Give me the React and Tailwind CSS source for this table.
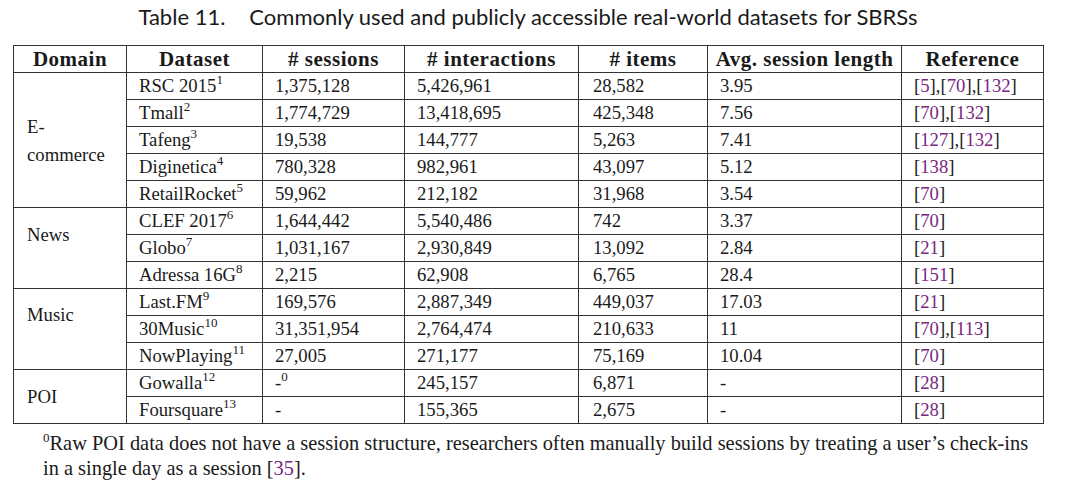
const serif = { fontFamily: '"Liberation Serif", "DejaVu Serif", serif' };

const groups = [
  {
    domain: ["E-", "commerce"],
    pad: "pt-[40px]",
    rows: [
      ["RSC 2015", "1", "1,375,128", "", "5,426,961", "28,582", "3.95", ["5", "70", "132"]],
      ["Tmall", "2", "1,774,729", "", "13,418,695", "425,348", "7.56", ["70", "132"]],
      ["Tafeng", "3", "19,538", "", "144,777", "5,263", "7.41", ["127", "132"]],
      ["Diginetica", "4", "780,328", "", "982,961", "43,097", "5.12", ["138"]],
      ["RetailRocket", "5", "59,962", "", "212,182", "31,968", "3.54", ["70"]],
    ],
  },
  {
    domain: ["News"],
    pad: "pt-[13px]",
    rows: [
      ["CLEF 2017", "6", "1,644,442", "", "5,540,486", "742", "3.37", ["70"]],
      ["Globo", "7", "1,031,167", "", "2,930,849", "13,092", "2.84", ["21"]],
      ["Adressa 16G", "8", "2,215", "", "62,908", "6,765", "28.4", ["151"]],
    ],
  },
  {
    domain: ["Music"],
    pad: "pt-[12px]",
    rows: [
      ["Last.FM", "9", "169,576", "", "2,887,349", "449,037", "17.03", ["21"]],
      ["30Music", "10", "31,351,954", "", "2,764,474", "210,633", "11", ["70", "113"]],
      ["NowPlaying", "11", "27,005", "", "271,177", "75,169", "10.04", ["70"]],
    ],
  },
  {
    domain: ["POI"],
    pad: "pt-[13px]",
    rows: [
      ["Gowalla", "12", "-", "0", "245,157", "6,871", "-", ["28"]],
      ["Foursquare", "13", "-", "", "155,365", "2,675", "-", ["28"]],
    ],
  },
];

function Refs({ ids }) {
  return (
    <>
      {ids.map((id, i) => (
        <span key={id}>
          {i > 0 ? "," : null}[<span className="text-[#7a2682]">{id}</span>]
        </span>
      ))}
    </>
  );
}

function Sup({ children }) {
  return <sup className="relative top-[-8px] align-baseline text-[13px] leading-none">{children}</sup>;
}

const cell = "h-[27px] border border-[#333] px-[12px] py-0 leading-[26px] whitespace-nowrap";
const head =
  "h-[27px] border border-[#333] px-0 py-0 text-center text-[21px] font-bold tracking-[0.5px] leading-[26px] whitespace-nowrap";

export default function App() {
  return (
    <div className="h-[491px] w-[1080px] overflow-hidden bg-white text-[#1a1a1a]">
      <div
        className="ml-[13px] w-[1030px] pt-[3px] text-center text-[22px] leading-[28px]"
        style={{ fontFamily: "Lato, 'Open Sans', sans-serif" }}
      >
        Table 11.<span className="ml-[24px]">Commonly used and publicly accessible real-world datasets for SBRSs</span>
      </div>

      <table
        className="ml-[13px] mt-[14px] w-[1030px] table-fixed border-collapse text-[18.7px]"
        style={serif}
      >
        <colgroup>
          <col className="w-[113px]" />
          <col className="w-[136px]" />
          <col className="w-[142px]" />
          <col className="w-[174px]" />
          <col className="w-[129px]" />
          <col className="w-[194px]" />
          <col className="w-[142px]" />
        </colgroup>
        <thead>
          <tr>
            <th className={head}>Domain</th>
            <th className={head}>Dataset</th>
            <th className={head}># sessions</th>
            <th className={head}># interactions</th>
            <th className={head}># items</th>
            <th className={head}>Avg. session length</th>
            <th className={head}>Reference</th>
          </tr>
        </thead>
        <tbody>
          {groups.map((g) =>
            g.rows.map((r, i) => (
              <tr key={r[0]}>
                {i === 0 ? (
                  <td
                    rowSpan={g.rows.length}
                    className={`border border-[#333] px-[13px] align-top leading-[28px] ${g.pad}`}
                  >
                    {g.domain.map((d) => (
                      <div key={d}>{d}</div>
                    ))}
                  </td>
                ) : null}
                <td className={cell}>
                  {r[0]}
                  <Sup>{r[1]}</Sup>
                </td>
                <td className={cell}>
                  {r[2]}
                  {r[3] ? <Sup>{r[3]}</Sup> : null}
                </td>
                <td className={cell}>{r[4]}</td>
                <td className={`${cell} pl-[14px]`}>{r[5]}</td>
                <td className={cell}>{r[6]}</td>
                <td className={`${cell} pr-0`}>
                  <Refs ids={r[7]} />
                </td>
              </tr>
            ))
          )}
        </tbody>
      </table>

      <div className="ml-[43px] mt-[7px] text-[20.4px] leading-[25px]" style={serif}>
        <sup className="relative top-[-8px] align-baseline text-[13px] leading-none">0</sup>
        Raw POI data does not have a session structure, researchers often manually build sessions by treating a user’s check-ins
        <br />
        in a single day as a session [<span className="text-[#7a2682]">35</span>].
      </div>
    </div>
  );
}
